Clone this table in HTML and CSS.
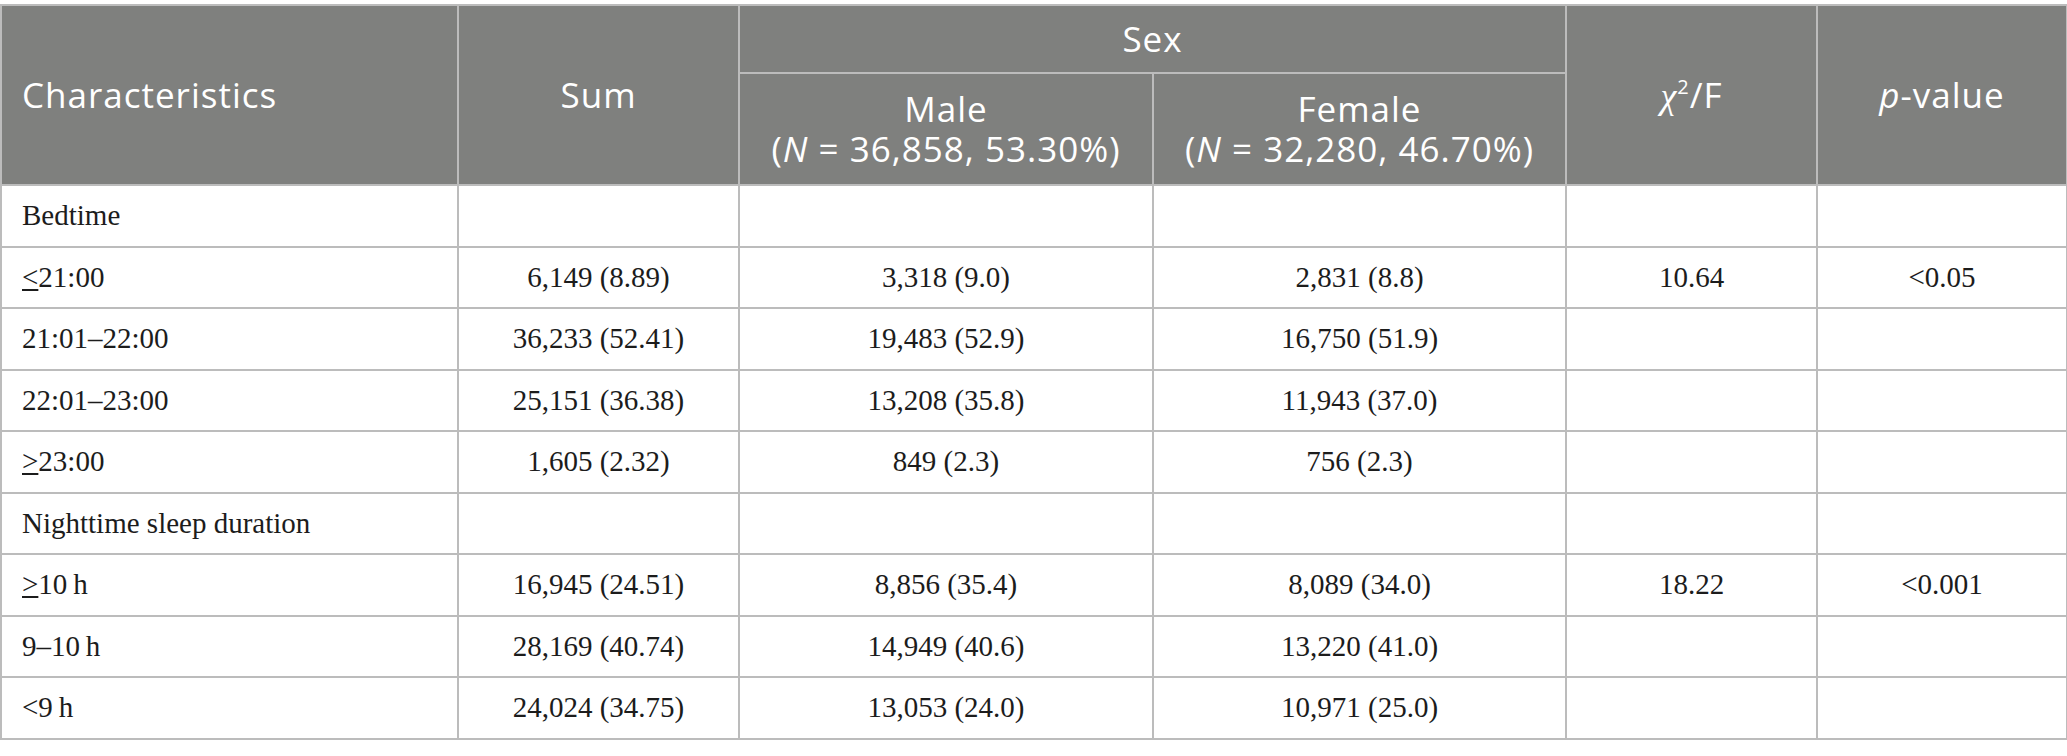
FILE: index.html
```html
<!DOCTYPE html>
<html lang="en">
<head>
    <meta charset="UTF-8">
    <title>Sleep characteristics by sex</title>
    <link rel="stylesheet" href="styles.css">
</head>
<body>
    <table class="stats">
        <colgroup>
            <col class="c-char">
            <col class="c-sum">
            <col class="c-male">
            <col class="c-female">
            <col class="c-chi">
            <col class="c-p">
        </colgroup>
        <thead>
            <tr class="head-top">
                <th rowspan="2" class="left">Characteristics</th>
                <th rowspan="2">Sum</th>
                <th colspan="2">Sex</th>
                <th rowspan="2"><span class="chi">χ</span><sup>2</sup>/F</th>
                <th rowspan="2"><i>p</i>-value</th>
            </tr>
            <tr class="head-sub">
                <th><span class="line">Male</span><span class="line">(<i>N</i>&nbsp;=&nbsp;36,858, 53.30%)</span></th>
                <th><span class="line">Female</span><span class="line">(<i>N</i>&nbsp;=&nbsp;32,280, 46.70%)</span></th>
            </tr>
        </thead>
        <tbody>
            <tr>
                <td class="left">Bedtime</td>
                <td></td><td></td><td></td><td></td><td></td>
            </tr>
            <tr>
                <td class="left"><u>&lt;</u>21:00</td>
                <td>6,149 (8.89)</td>
                <td>3,318 (9.0)</td>
                <td>2,831 (8.8)</td>
                <td>10.64</td>
                <td>&lt;0.05</td>
            </tr>
            <tr>
                <td class="left">21:01–22:00</td>
                <td>36,233 (52.41)</td>
                <td>19,483 (52.9)</td>
                <td>16,750 (51.9)</td>
                <td></td><td></td>
            </tr>
            <tr>
                <td class="left">22:01–23:00</td>
                <td>25,151 (36.38)</td>
                <td>13,208 (35.8)</td>
                <td>11,943 (37.0)</td>
                <td></td><td></td>
            </tr>
            <tr>
                <td class="left"><u>&gt;</u>23:00</td>
                <td>1,605 (2.32)</td>
                <td>849 (2.3)</td>
                <td>756 (2.3)</td>
                <td></td><td></td>
            </tr>
            <tr>
                <td class="left">Nighttime sleep duration</td>
                <td></td><td></td><td></td><td></td><td></td>
            </tr>
            <tr>
                <td class="left"><u>&gt;</u>10&thinsp;h</td>
                <td>16,945 (24.51)</td>
                <td>8,856 (35.4)</td>
                <td>8,089 (34.0)</td>
                <td>18.22</td>
                <td>&lt;0.001</td>
            </tr>
            <tr>
                <td class="left">9–10&thinsp;h</td>
                <td>28,169 (40.74)</td>
                <td>14,949 (40.6)</td>
                <td>13,220 (41.0)</td>
                <td></td><td></td>
            </tr>
            <tr>
                <td class="left">&lt;9&thinsp;h</td>
                <td>24,024 (34.75)</td>
                <td>13,053 (24.0)</td>
                <td>10,971 (25.0)</td>
                <td></td><td></td>
            </tr>
        </tbody>
    </table>
</body>
</html>
```

FILE: styles.css
```css
body {
    margin: 0;
    padding: 4px 0 0 0;
    background-color: white;
}

.stats {
    width: 2066px;
    border-collapse: collapse;
    table-layout: fixed;
}

.c-char { width: 457px; }
.c-sum { width: 281px; }
.c-male { width: 414px; }
.c-female { width: 413px; }
.c-chi { width: 251px; }
.c-p { width: 250px; }

.stats th,
.stats td {
    border: 2px solid #bcbcbc;
    text-align: center;
    vertical-align: middle;
    padding: 0 10px;
}

.stats th {
    background-color: #7f807e;
    color: white;
    font-family: 'Open Sans', 'Noto Sans', sans-serif;
    font-weight: normal;
    font-size: 35px;
    letter-spacing: 1px;
    line-height: 40px;
}

.stats th .line {
    display: block;
    height: 40px;
}

.stats th .chi {
    font-family: 'Liberation Serif', serif;
    font-style: italic;
    font-size: 36px;
}

.stats th sup {
    font-size: 20px;
    line-height: 0;
    vertical-align: 14px;
}

.head-top th[colspan] {
    height: 66px;
}

.head-sub th {
    height: 110px;
}

.stats td {
    font-family: 'Liberation Serif', 'Times New Roman', serif;
    font-size: 29px;
    color: #1c1c1c;
    height: 59.5px;
}

.stats .left {
    text-align: left;
    padding-left: 20px;
}
```
